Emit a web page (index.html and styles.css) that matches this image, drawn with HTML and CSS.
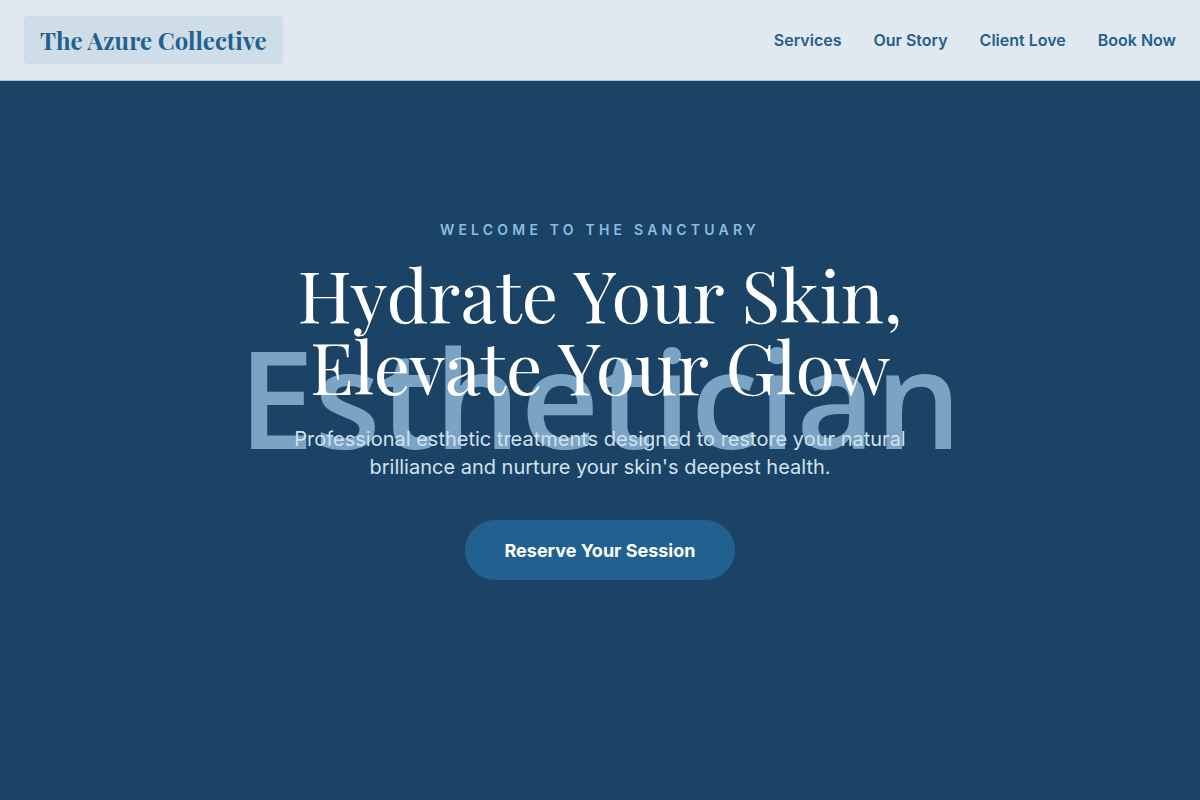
FILE: index.html
```html
<!DOCTYPE html>
<html lang="en">
<head>
<meta charset="utf-8">
<title>The Azure Collective</title>
<link rel="stylesheet" href="styles.css">
</head>
<body>
<header class="site-header">
  <a class="logo" href="#">The Azure Collective</a>
  <nav class="nav">
    <a href="#">Services</a>
    <a href="#">Our Story</a>
    <a href="#">Client Love</a>
    <a href="#">Book Now</a>
  </nav>
</header>
<main class="hero">
  <div class="hero-content">
    <span class="watermark" aria-hidden="true">Esthetician</span>
    <p class="eyebrow">Welcome to the Sanctuary</p>
    <h1 class="title">Hydrate Your Skin,<br>Elevate Your Glow</h1>
    <p class="lead">Professional esthetic treatments designed to restore your natural brilliance and nurture your skin's deepest health.</p>
    <a class="cta" href="#">Reserve Your Session</a>
  </div>
</main>
</body>
</html>
```
FILE: styles.css
```css
* { box-sizing: border-box; }
html, body { margin: 0; padding: 0; }
body {
  font-family: Inter, "Liberation Sans", sans-serif;
  background: #1a4366;
  width: 1200px;
  height: 800px;
  overflow: hidden;
}
a { text-decoration: none; }

.site-header {
  height: 81px;
  background: #e2e8f0;
  border-bottom: 1px solid #a9c6de;
  display: flex;
  align-items: center;
  justify-content: space-between;
  padding: 0 24px;
}
.logo {
  display: block;
  background: #cfdde8;
  color: #22608e;
  font-family: "Playfair Display", "DejaVu Serif", "Liberation Serif", serif;
  font-weight: 700;
  font-size: 24px;
  line-height: 32px;
  padding: 8px 16px;
  border-radius: 4px;
}
.nav {
  display: flex;
  gap: 32px;
}
.nav a {
  color: #22608e;
  font-weight: 600;
  font-size: 16px;
}

.hero {
  height: 719px;
  display: flex;
  justify-content: center;
  padding-top: 139px;
}
.hero-content {
  position: relative;
  display: flex;
  flex-direction: column;
  align-items: center;
  text-align: center;
  width: 720px;
  height: 361px;
}
.watermark {
  position: absolute;
  left: 50%;
  top: 50%;
  transform: translate(-50%, -53%);
  font-family: "Open Sans", "Noto Sans", sans-serif;
  font-weight: 600;
  font-size: 136px;
  line-height: 1;
  color: #7ba3c3;
  white-space: nowrap;
  z-index: 0;
}
.eyebrow, .title, .lead, .cta { position: relative; z-index: 1; }
.eyebrow {
  margin: 0;
  font-size: 14px;
  line-height: 20px;
  font-weight: 600;
  letter-spacing: 4.2px;
  text-transform: uppercase;
  color: #8cbde0;
}
.title {
  margin: 17px 0 0;
  font-family: "Playfair Display", "DejaVu Serif", "Liberation Serif", serif;
  font-weight: 400;
  font-size: 72px;
  line-height: 72px;
  color: #ffffff;
}
.lead {
  margin: 24px 0 0;
  max-width: 640px;
  font-size: 20px;
  line-height: 28px;
  color: #d3e1ec;
}
.cta {
  margin-top: 39px;
  width: 270px;
  height: 60px;
  border-radius: 30px;
  background: #22618f;
  color: #ffffff;
  font-weight: 700;
  font-size: 18px;
  display: flex;
  align-items: center;
  justify-content: center;
}
```
